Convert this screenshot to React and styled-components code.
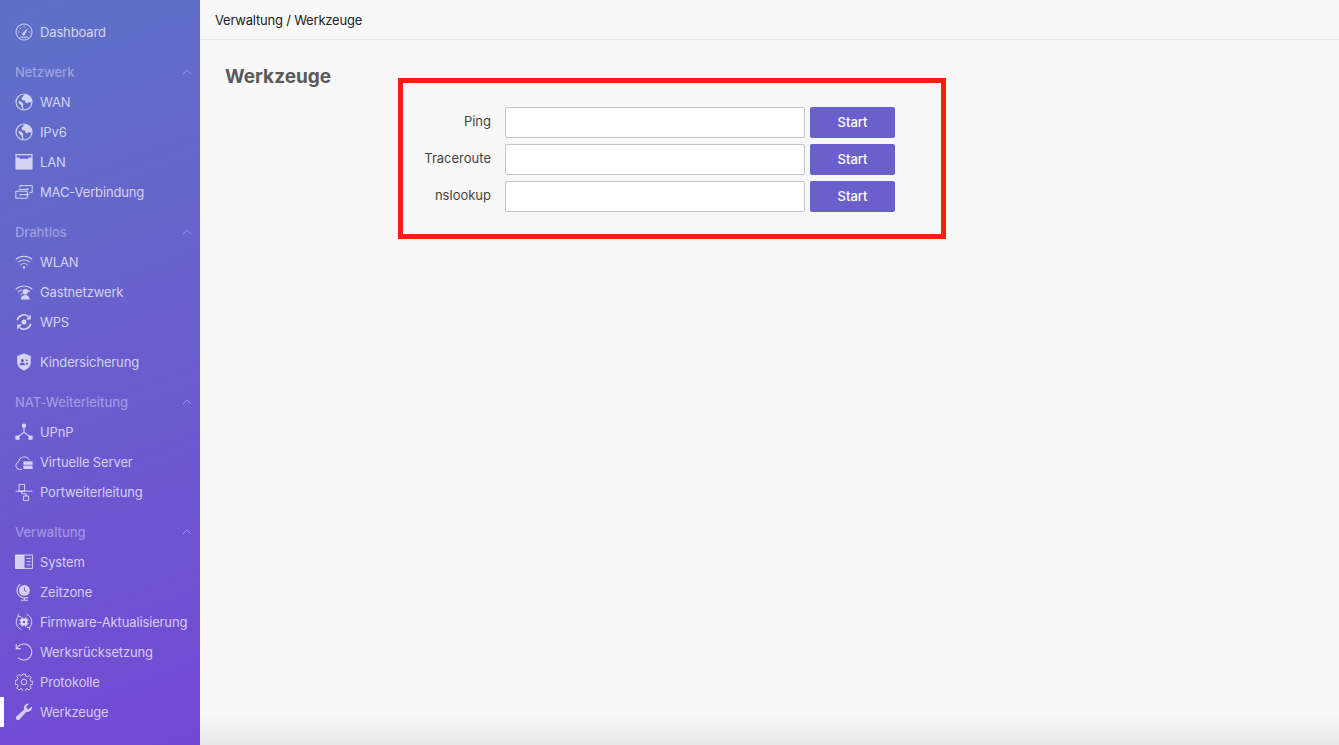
import styled, { createGlobalStyle } from "styled-components";

const GlobalStyle = createGlobalStyle`
  html, body { margin: 0; height: 100%; overflow: hidden; background: #f8f8f8; }
  body { font-family: Inter, "Liberation Sans", sans-serif; }
  * { box-sizing: border-box; }
`;

const icons = {
  gauge: (
    <>
      <circle cx="9" cy="9" r="8.1" fill="none" stroke="currentColor" strokeWidth="1" />
      <path d="M4.6 14.2h8.8M2.8 9h1.6M13.6 9h1.6M9 2.8v1.6M4.6 4.6l1.1 1.1" fill="none" stroke="currentColor" strokeWidth="1" />
      <path d="M13 5 10 11a1.4 1.4 0 1 1-1.9-1.2Z" fill="currentColor" />
    </>
  ),
  globe: (
    <>
      <circle cx="9" cy="9" r="8" fill="none" stroke="currentColor" strokeWidth="1.2" />
      <path d="M8 3.2 10 1.4C13 2 15.8 4.4 16.4 7.4L15.8 10 13.6 8.8 12.6 10.6 10.4 9.6 10 7.6 7.4 7.2 6.4 5.4ZM3.6 7.4 6.6 9 8.4 11.2 7.8 13 8.8 16 7.2 15.8 6.2 12.2 4 10.6Z" fill="currentColor" />
    </>
  ),
  lan: (
    <>
      <rect x="0.4" y="1" width="17.2" height="15.6" fill="currentColor" />
      <path d="M1.6 2.2h14.8v2.4h-3v1.2H4.6V4.6h-3Z" fill="#6565ca" />
    </>
  ),
  mac: (
    <path d="M5 4.8V2.6h12.2v6.8h-3M.8 8.2h11.4v7H.8ZM3.6 6.4h9.8l-1.4-1.4M14.4 11.6H4.8l1.4 1.4" fill="none" stroke="currentColor" strokeWidth="1" />
  ),
  wifi: (
    <>
      <path d="M.8 6.4c4.7-4.2 11.7-4.2 16.4 0M3.2 9.2c3.3-3 8.3-3 11.6 0M5.6 11.8c1.9-1.8 4.9-1.8 6.8 0" fill="none" stroke="currentColor" strokeWidth="1.1" />
      <circle cx="9" cy="14.4" r="1.2" fill="currentColor" />
    </>
  ),
  guest: (
    <>
      <path d="M.8 6c4.7-4 11.7-4 16.4 0M3 9c1.3-1.1 2.6-1.8 4-2.2M15 9c-1-.9-2-1.5-3.2-1.9M5.4 11.8l1.8-1.2" fill="none" stroke="currentColor" strokeWidth="1.1" />
      <circle cx="10.2" cy="8.8" r="2.7" fill="currentColor" />
      <path d="M5.8 16.6c0-3 2-4.6 4.4-4.6s4.4 1.6 4.4 4.6Z" fill="currentColor" />
    </>
  ),
  sync: (
    <>
      <path d="M2.2 7.2A7 7 0 0 1 13.4 3.4M15.8 10.8A7 7 0 0 1 4.6 14.6" fill="none" stroke="currentColor" strokeWidth="1.5" />
      <path d="M15.8 1.4v5h-5ZM2.2 16.6v-5h5Z" fill="currentColor" />
      <circle cx="9" cy="9" r="2.5" fill="currentColor" />
    </>
  ),
  shield: (
    <>
      <path d="M9 .6 15.8 3v6.4c0 3.8-3 6.6-6.8 8-3.8-1.4-6.8-4.2-6.8-8V3Z" fill="currentColor" />
      <circle cx="7.4" cy="7.6" r="1.5" fill="#6a5cce" />
      <path d="M4.6 12.2c0-1.8 1.2-2.8 2.8-2.8s2.8 1 2.8 2.8ZM10.6 6.8h2.4v1h-2.4ZM11.2 9.6H13v2.2h-1.8Z" fill="#6a5cce" />
    </>
  ),
  upnp: (
    <>
      <circle cx="9" cy="2.8" r="2.2" fill="currentColor" />
      <rect x="0.4" y="12.6" width="4.2" height="4.2" fill="currentColor" />
      <rect x="13.4" y="12.6" width="4.2" height="4.2" fill="currentColor" />
      <path d="M9 4v5.2M9 9.2 3.4 13.4M9 9.2l5.6 4.2" fill="none" stroke="currentColor" strokeWidth="1.1" />
    </>
  ),
  cloud: (
    <>
      <path d="M7 16.4H4.4a3.8 3.8 0 0 1-1-7.4 5.8 5.8 0 0 1 11-1.8" fill="none" stroke="currentColor" strokeWidth="1" />
      <rect x="8.4" y="8.4" width="9.2" height="3.4" fill="currentColor" />
      <rect x="8.4" y="12.6" width="9.2" height="3.4" fill="currentColor" />
    </>
  ),
  port: (
    <path d="M.6 8.2h16.8M4 1.4h5.6v6.8H4ZM8.6 13h5v4.6h-5ZM6.8 8.2v2.6h4.4V13" fill="none" stroke="currentColor" strokeWidth="1" />
  ),
  system: (
    <>
      <rect x="0.6" y="2" width="16.8" height="13.4" fill="none" stroke="currentColor" strokeWidth="1" />
      <rect x="0.6" y="2" width="9" height="13.4" fill="currentColor" />
      <path d="M11.4 5.4h4.4M11.4 8.6h4.4M11.4 11.8h4.4" fill="none" stroke="currentColor" strokeWidth="1" />
    </>
  ),
  timezone: (
    <>
      <circle cx="9.4" cy="7.4" r="5.4" fill="currentColor" />
      <path d="M9.4 4.4v3.2l2 1.2" fill="none" stroke="#6e55d0" strokeWidth="1" />
      <path d="M5.2 1.2a7.6 7.6 0 0 0 7.8 13M9.4 14.6v2.2M5.8 17.2h7.2" fill="none" stroke="currentColor" strokeWidth="1.1" />
    </>
  ),
  firmware: (
    <>
      <path d="M3.6 3.2a8.2 8.2 0 0 0 2.8 13.4M14.4 14.8a8.2 8.2 0 0 0-2.8-13.4M3.2 .8v2.8H6M14.8 17.2v-2.8H12" fill="none" stroke="currentColor" strokeWidth="1" />
      <rect x="5.6" y="5.6" width="6.8" height="6.8" rx="1" fill="currentColor" />
      <path d="M7.2 3.8v10.4M10.8 3.8v10.4M3.8 7.2h10.4M3.8 10.8h10.4" fill="none" stroke="currentColor" strokeWidth="0.8" />
      <circle cx="9" cy="9" r="1.3" fill="#6f52d1" />
    </>
  ),
  reset: (
    <path d="M1.2 1v4.6h4.6M1.8 5.2A8 8 0 1 1 3.2 14.6" fill="none" stroke="currentColor" strokeWidth="1.1" />
  ),
  gear: (
    <>
      <path d="M7.6 1h2.8l.4 2.2 1.5.7 1.9-1.3 2 2-1.3 1.9.7 1.5 2.2.4v2.8l-2.2.4-.7 1.5 1.3 1.9-2 2-1.9-1.3-1.5.7-.4 2.2H7.6l-.4-2.2-1.5-.7-1.9 1.3-2-2 1.3-1.9-.7-1.5-2.2-.4V7.4l2.2-.4.7-1.5-1.3-1.9 2-2 1.9 1.3 1.5-.7Z" fill="none" stroke="currentColor" strokeWidth="1" />
      <circle cx="9" cy="9" r="2.8" fill="none" stroke="currentColor" strokeWidth="1" />
    </>
  ),
  wrench: (
    <path d="M16.8 3.2 13.8 6.2 11.8 5.6 11.2 3.6 14.2.8C11.6.2 8.8 2 9 5.2L9.2 6.4 1.6 13.2C.6 14.2.8 15.6 1.6 16.4 2.4 17.2 3.8 17.2 4.6 16.4L11.4 8.8C14.8 9.6 17.6 6.6 16.8 3.2Z" fill="currentColor" />
  ),
};

const groups = [
  { items: [{ label: "Dashboard", icon: "gauge" }] },
  {
    title: "Netzwerk",
    items: [
      { label: "WAN", icon: "globe" },
      { label: "IPv6", icon: "globe" },
      { label: "LAN", icon: "lan" },
      { label: "MAC-Verbindung", icon: "mac" },
    ],
  },
  {
    title: "Drahtlos",
    items: [
      { label: "WLAN", icon: "wifi" },
      { label: "Gastnetzwerk", icon: "guest" },
      { label: "WPS", icon: "sync" },
    ],
  },
  { items: [{ label: "Kindersicherung", icon: "shield" }] },
  {
    title: "NAT-Weiterleitung",
    items: [
      { label: "UPnP", icon: "upnp" },
      { label: "Virtuelle Server", icon: "cloud" },
      { label: "Portweiterleitung", icon: "port" },
    ],
  },
  {
    title: "Verwaltung",
    items: [
      { label: "System", icon: "system" },
      { label: "Zeitzone", icon: "timezone" },
      { label: "Firmware-Aktualisierung", icon: "firmware" },
      { label: "Werksrücksetzung", icon: "reset" },
      { label: "Protokolle", icon: "gear" },
      { label: "Werkzeuge", icon: "wrench", active: true },
    ],
  },
];

const tools = ["Ping", "Traceroute", "nslookup"];

const App = () => {
  return (
    <Page>
      <GlobalStyle />
      <Sidebar>
        {groups.map((group, i) => (
          <Group key={i}>
            {group.title && (
              <GroupHeader>
                {group.title}
                <Chevron viewBox="0 0 10 6">
                  <path d="M1 5 5 1l4 4" />
                </Chevron>
              </GroupHeader>
            )}
            {group.items.map((item) => (
              <NavItem key={item.label} $active={item.active}>
                <NavIcon viewBox="0 0 18 18">{icons[item.icon]}</NavIcon>
                {item.label}
              </NavItem>
            ))}
          </Group>
        ))}
      </Sidebar>
      <Main>
        <Breadcrumb>Verwaltung / Werkzeuge</Breadcrumb>
        <Content>
          <Title>Werkzeuge</Title>
          <Highlight>
            {tools.map((tool) => (
              <ToolRow key={tool}>
                <ToolLabel>{tool}</ToolLabel>
                <ToolInput />
                <StartButton>Start</StartButton>
              </ToolRow>
            ))}
          </Highlight>
        </Content>
        <BottomShade />
      </Main>
    </Page>
  );
};

export default App;

const Page = styled.div`
  display: flex;
  width: 100vw;
  height: 100vh;
  overflow: hidden;
`;

const Sidebar = styled.nav`
  width: 200px;
  flex-shrink: 0;
  padding-top: 17px;
  display: flex;
  flex-direction: column;
  gap: 10px;
  background: linear-gradient(160deg, #5d71c7 0%, #6764cc 35%, #6d55d1 70%, #7349d4 100%);
`;

const Group = styled.div`
  display: flex;
  flex-direction: column;
`;

const GroupHeader = styled.div`
  height: 30px;
  padding: 0 8px 0 15px;
  display: flex;
  align-items: center;
  justify-content: space-between;
  font-size: 13px;
  font-weight: 500;
  letter-spacing: -0.05px;
  color: rgba(255, 255, 255, 0.38);
`;

const Chevron = styled.svg`
  width: 10px;
  height: 6px;
  fill: none;
  stroke: rgba(255, 255, 255, 0.35);
  stroke-width: 1;
`;

const NavItem = styled.div`
  position: relative;
  height: 30px;
  padding-left: 15px;
  display: flex;
  align-items: center;
  gap: 7px;
  font-size: 13px;
  letter-spacing: -0.14px;
  color: rgba(255, 255, 255, 0.72);
  white-space: nowrap;

  &::before {
    content: "";
    display: ${(p) => (p.$active ? "block" : "none")};
    position: absolute;
    left: 0;
    top: 0;
    bottom: 0;
    width: 4px;
    background: #fff;
  }
`;

const NavIcon = styled.svg`
  width: 18px;
  height: 18px;
  flex-shrink: 0;
  color: rgba(255, 255, 255, 0.72);
`;

const Main = styled.main`
  position: relative;
  flex: 1;
  display: flex;
  flex-direction: column;
  background: #f8f8f8;
`;

const Breadcrumb = styled.header`
  height: 40px;
  padding-left: 15px;
  display: flex;
  align-items: center;
  font-size: 13px;
  letter-spacing: -0.2px;
  color: #222;
  border-bottom: 1px solid #e4e4e4;
`;

const Content = styled.section`
  display: flex;
  align-items: flex-start;
  padding: 25px 0 0 25px;
`;

const Title = styled.h1`
  width: 173px;
  flex-shrink: 0;
  margin: 0;
  font-size: 19px;
  line-height: 24px;
  font-weight: 700;
  color: #5a5a5a;
`;

const Highlight = styled.div`
  width: 548px;
  height: 161px;
  margin-top: 13px;
  padding-top: 24px;
  display: flex;
  flex-direction: column;
  gap: 6px;
  border: 5px solid #f6200f;
`;

const ToolRow = styled.div`
  display: flex;
  align-items: flex-start;
`;

const ToolLabel = styled.label`
  width: 88px;
  padding-top: 6px;
  text-align: right;
  font-size: 13px;
  line-height: 16px;
  color: #444;
`;

const ToolInput = styled.input`
  width: 300px;
  height: 31px;
  margin-left: 14px;
  background: #fff;
  border: 1px solid #c4c4c4;
  border-radius: 2px;
  outline: none;
`;

const StartButton = styled.button`
  width: 85px;
  height: 31px;
  margin-left: 5px;
  padding: 0 0 2px;
  border: none;
  border-radius: 2px;
  background: #6a60cc;
  color: #fff;
  font-family: inherit;
  font-size: 13px;
  font-weight: 500;
`;

const BottomShade = styled.div`
  position: absolute;
  left: 0;
  right: 0;
  bottom: 0;
  height: 32px;
  background: linear-gradient(to bottom, rgba(0, 0, 0, 0), rgba(0, 0, 0, 0.065));
  pointer-events: none;
`;
